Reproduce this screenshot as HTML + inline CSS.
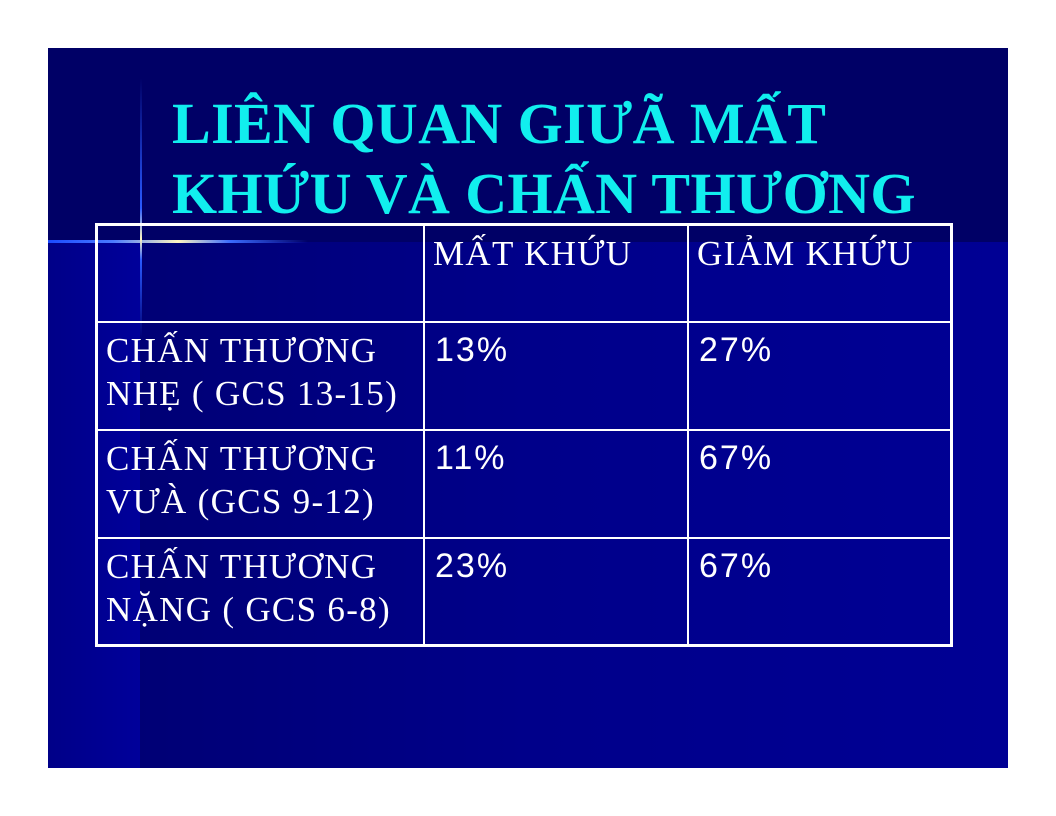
<!DOCTYPE html>
<html><head><meta charset="utf-8"><style>
html,body{margin:0;padding:0;background:#fff;}
body{width:1056px;height:816px;position:relative;overflow:hidden;}
#s{position:absolute;left:48px;top:48px;width:960px;height:720px;overflow:hidden;
background:linear-gradient(90deg,#000070 0%,#000078 15%,#00008a 50%,#000094 100%);}
#top{position:absolute;left:0;top:0;width:960px;height:194px;background:#000066;}
#left{position:absolute;left:0;top:194px;width:92px;height:526px;background:linear-gradient(90deg,#000088,#00009a);}
#hl{position:absolute;left:0;top:192px;width:260px;height:3px;background:linear-gradient(90deg,#1a4aff,#4a7aff 25%,#fff6c0 50%,#3a6aff 70%,rgba(0,0,200,0));}
#vl{position:absolute;left:92px;top:30px;width:2px;height:260px;background:linear-gradient(180deg,rgba(0,0,200,0),#2a5aff 50%,#fff6c0 62%,#2a5aff 70%,rgba(0,0,200,0));}
h1{position:absolute;left:124px;top:41px;margin:0;font:bold 58px/70px "Liberation Serif",serif;color:#11EEEE;letter-spacing:0.4px;white-space:nowrap;}
table{position:absolute;left:47px;top:175px;border-collapse:collapse;border:3px solid #fff;}
td{border:2px solid #fff;vertical-align:top;padding:6px 8px 0 8px;color:#fff;font:35px/43px "Liberation Serif",serif;letter-spacing:1.3px;}
td.n{font:34px/43px "Liberation Sans",sans-serif;padding:6px 8px 0 10px;letter-spacing:2px;}
</style></head><body>
<div id="s">
<div id="top"></div><div id="left"></div>
<div id="hl"></div><div id="vl"></div>
<h1>LIÊN QUAN GIƯÃ MẤT<br>KHỨU VÀ CHẤN THƯƠNG</h1>
<table>
<tr style="height:97px"><td style="width:309px"></td><td style="width:246px">MẤT KHỨU</td><td style="width:245px">GIẢM KHỨU</td></tr>
<tr style="height:108px"><td>CHẤN THƯƠNG NHẸ ( GCS 13-15)</td><td class="n">13%</td><td class="n">27%</td></tr>
<tr style="height:108px"><td>CHẤN THƯƠNG VƯÀ (GCS 9-12)</td><td class="n">11%</td><td class="n">67%</td></tr>
<tr style="height:108px"><td>CHẤN THƯƠNG NẶNG ( GCS 6-8)</td><td class="n">23%</td><td class="n">67%</td></tr>
</table>
</div>
</body></html>
